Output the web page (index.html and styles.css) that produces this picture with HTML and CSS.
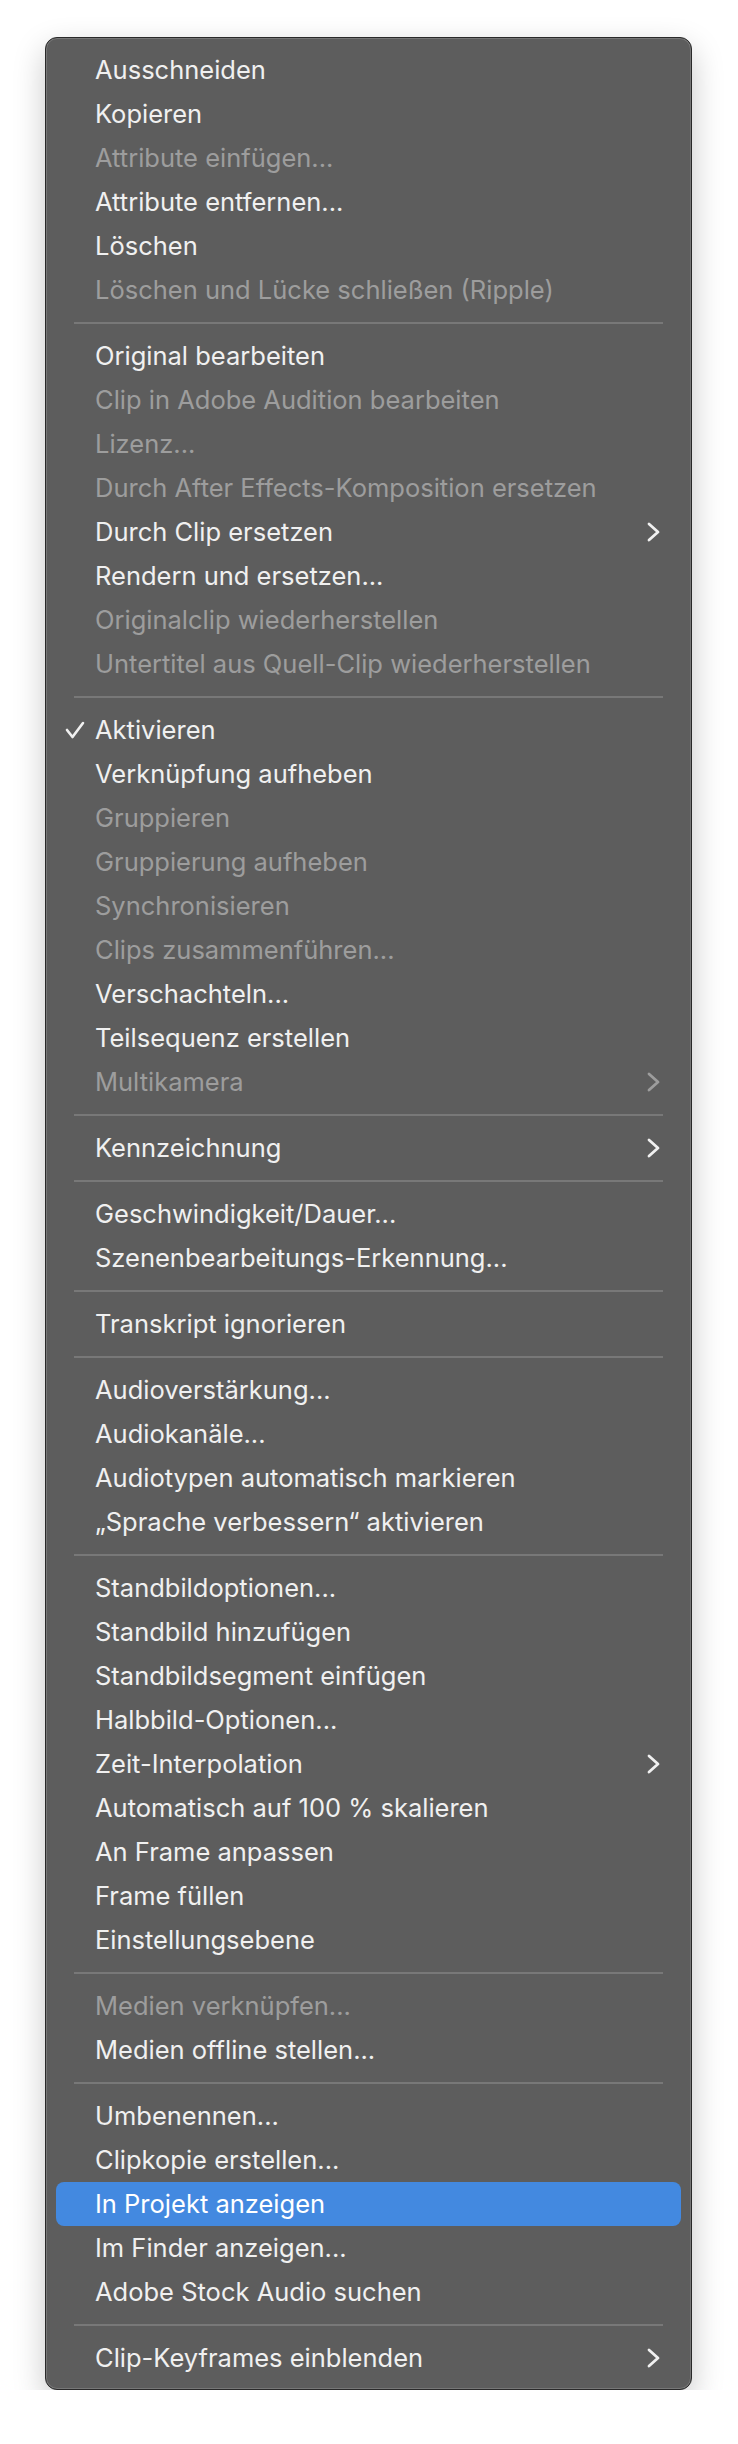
FILE: index.html
```html
<!DOCTYPE html>
<html lang="de">
<head>
    <meta charset="UTF-8">
    <meta name="viewport" content="width=device-width, initial-scale=1.0">
    <title>Kontextmenü</title>
    <link rel="stylesheet" href="styles.css">
</head>
<body>

    <div class="menu">
        <!-- Bearbeiten -->
        <div class="item">Ausschneiden</div>
        <div class="item">Kopieren</div>
        <div class="item disabled">Attribute einfügen...</div>
        <div class="item">Attribute entfernen...</div>
        <div class="item">Löschen</div>
        <div class="item disabled">Löschen und Lücke schließen (Ripple)</div>
        <div class="separator"></div>

        <div class="item">Original bearbeiten</div>
        <div class="item disabled">Clip in Adobe Audition bearbeiten</div>
        <div class="item disabled">Lizenz...</div>
        <div class="item disabled">Durch After Effects-Komposition ersetzen</div>
        <div class="item">Durch Clip ersetzen
            <svg class="chevron" width="14" height="20" viewBox="0 0 14 20"><polyline points="2,2 11,10 2,18"/></svg>
        </div>
        <div class="item">Rendern und ersetzen...</div>
        <div class="item disabled">Originalclip wiederherstellen</div>
        <div class="item disabled">Untertitel aus Quell-Clip wiederherstellen</div>
        <div class="separator"></div>

        <div class="item">
            <svg class="check" width="20" height="18" viewBox="0 0 20 18"><polyline points="2,9 7.5,16 18,2"/></svg>Aktivieren
        </div>
        <div class="item">Verknüpfung aufheben</div>
        <div class="item disabled">Gruppieren</div>
        <div class="item disabled">Gruppierung aufheben</div>
        <div class="item disabled">Synchronisieren</div>
        <div class="item disabled">Clips zusammenführen...</div>
        <div class="item">Verschachteln...</div>
        <div class="item">Teilsequenz erstellen</div>
        <div class="item disabled">Multikamera
            <svg class="chevron" width="14" height="20" viewBox="0 0 14 20"><polyline points="2,2 11,10 2,18"/></svg>
        </div>
        <div class="separator"></div>

        <div class="item">Kennzeichnung
            <svg class="chevron" width="14" height="20" viewBox="0 0 14 20"><polyline points="2,2 11,10 2,18"/></svg>
        </div>
        <div class="separator"></div>

        <div class="item">Geschwindigkeit/Dauer...</div>
        <div class="item">Szenenbearbeitungs-Erkennung...</div>
        <div class="separator"></div>

        <div class="item">Transkript ignorieren</div>
        <div class="separator"></div>

        <!-- Audio -->
        <div class="item">Audioverstärkung...</div>
        <div class="item">Audiokanäle...</div>
        <div class="item">Audiotypen automatisch markieren</div>
        <div class="item">„Sprache verbessern“ aktivieren</div>
        <div class="separator"></div>

        <!-- Video -->
        <div class="item">Standbildoptionen...</div>
        <div class="item">Standbild hinzufügen</div>
        <div class="item">Standbildsegment einfügen</div>
        <div class="item">Halbbild-Optionen...</div>
        <div class="item">Zeit-Interpolation
            <svg class="chevron" width="14" height="20" viewBox="0 0 14 20"><polyline points="2,2 11,10 2,18"/></svg>
        </div>
        <div class="item">Automatisch auf 100 % skalieren</div>
        <div class="item">An Frame anpassen</div>
        <div class="item">Frame füllen</div>
        <div class="item">Einstellungsebene</div>
        <div class="separator"></div>

        <div class="item disabled">Medien verknüpfen...</div>
        <div class="item">Medien offline stellen...</div>
        <div class="separator"></div>

        <div class="item">Umbenennen...</div>
        <div class="item">Clipkopie erstellen...</div>
        <div class="item active">In Projekt anzeigen</div>
        <div class="item">Im Finder anzeigen...</div>
        <div class="item">Adobe Stock Audio suchen</div>
        <div class="separator"></div>

        <div class="item">Clip-Keyframes einblenden
            <svg class="chevron" width="14" height="20" viewBox="0 0 14 20"><polyline points="2,2 11,10 2,18"/></svg>
        </div>
    </div>

</body>
</html>
```

FILE: styles.css
```css
body, html {
    margin: 0;
    padding: 0;
    background-color: #ffffff;
}
body {
    padding: 37px 0 0 45px;
    font-family: 'Inter', 'Noto Sans', sans-serif;
}
.menu {
    box-sizing: border-box;
    width: 647px;
    padding: 10px 10px 9px;
    background-color: #5d5d5d;
    border: 1px solid #2a2a2a;
    border-radius: 12px;
    box-shadow: inset 0 0 0 1px rgba(255, 255, 255, 0.16),
                0 12px 32px rgba(0, 0, 0, 0.22);
}
.item {
    display: flex;
    align-items: center;
    height: 44px;
    line-height: 44px;
    padding: 0 20px 0 39px;
    border-radius: 8px;
    font-size: 25.5px;
    color: #f0f0f0;
    white-space: nowrap;
}
.item.disabled {
    color: #9d9d9d;
}
.item.active {
    background-color: #4389e0;
    color: #ffffff;
}
.check {
    margin-left: -30px;
    margin-right: 10px;
    fill: none;
    stroke: #f0f0f0;
    stroke-width: 2.6;
    stroke-linecap: round;
    stroke-linejoin: round;
}
.chevron {
    margin-left: auto;
    fill: none;
    stroke: currentColor;
    stroke-width: 2.8;
    stroke-linecap: round;
    stroke-linejoin: round;
}
.separator {
    height: 22px;
    display: flex;
    align-items: center;
    padding: 0 18px;
}
.separator::after {
    content: "";
    flex: 1;
    height: 2px;
    background-color: #787878;
}
```
